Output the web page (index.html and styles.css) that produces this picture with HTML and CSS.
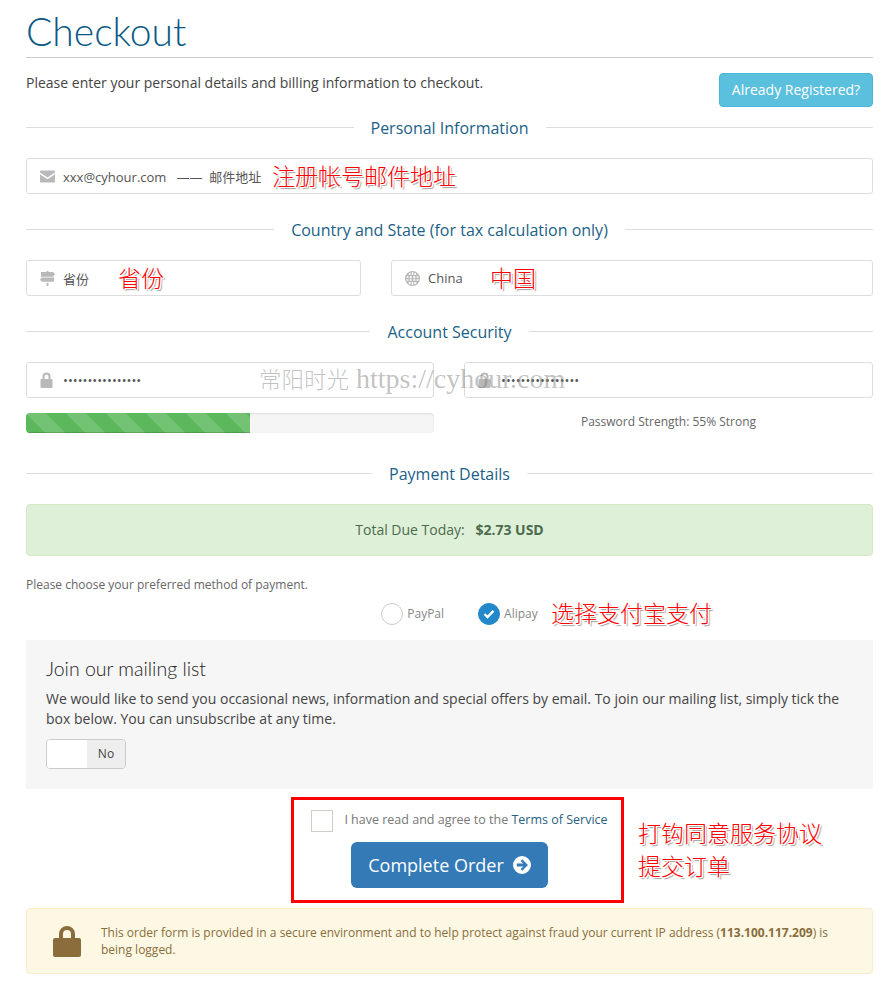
FILE: index.html
```html
<!DOCTYPE html>
<html lang="zh">
<head>
    <meta charset="UTF-8">
    <title>Checkout</title>
    <link rel="stylesheet" href="styles.css">
</head>
<body>
    <div class="header-lined">
        <h1>Checkout</h1>
    </div>

    <div class="intro">
        <p>Please enter your personal details and billing information to checkout.</p>
        <a class="btn-info" href="#">Already Registered?</a>
    </div>

    <div class="sub-heading"><span>Personal Information</span></div>
    <div class="field">
        <svg class="field-icon" viewBox="0 0 16 13"><path d="M0 2.200V1.200C0 .5.6 0 1.300 0h13.400C15.400 0 16 .5 16 1.200v1L8 7.500zM0 4v7.800C0 12.500.6 13 1.300 13h13.400c.7 0 1.300-.5 1.300-1.200V4L8 9.300z"/></svg>
        <input type="text" value="xxx@cyhour.com &nbsp;&nbsp;—— &nbsp;邮件地址">
    </div>

    <div class="sub-heading"><span>Country and State (for tax calculation only)</span></div>
    <div class="row row-location">
        <div class="field">
            <svg class="field-icon" viewBox="0 0 16 16"><path d="M7 0h2v1h5l2 2.500L14 6H1.500A.5.5 0 0 1 1 5.500v-4a.5.5 0 0 1 .5-.5H7zM2 7h12.500a.5.5 0 0 1 .5.5v3.500a.5.5 0 0 1-.5.5H2L0 9.250zM7 12.500h2V16H7z"/></svg>
            <input type="text" value="省份">
        </div>
        <div class="field">
            <svg class="field-icon" viewBox="0 0 16 16"><path fill-rule="evenodd" d="M8 0a8 8 0 1 1 0 16A8 8 0 0 1 8 0zM7.200 1.300v3h1.600v-3zM4 2.800v1.500h2V1.800C5.200 2 4.500 2.300 4 2.800zM10 1.800v2.500h2V2.800c-.5-.5-1.200-.8-2-1zM1.400 7.200h2.300V5.500H2.100c-.4.500-.6 1.100-.7 1.700zM5 5.500v2.200h2.200V5.500zM8.800 5.500v2.200H11V5.500zM12.300 5.500v1.700h2.300c-.1-.6-.3-1.200-.7-1.700zM1.400 8.800c.1.600.3 1.200.7 1.700h1.600V8.800zM5 8.800v1.700h2.200V8.800zM8.800 8.800v1.700H11V8.800zM12.300 8.800v1.700h1.600c.4-.5.6-1.100.7-1.700zM4 11.800v1.400c.5.500 1.200.8 2 1v-2.400zM7.200 11.800v2.900h1.600v-2.900zM10 11.800v2.400c.8-.2 1.500-.5 2-1v-1.400z"/></svg>
            <input type="text" value="China">
        </div>
    </div>

    <div class="sub-heading"><span>Account Security</span></div>
    <div class="row row-password">
        <div class="field">
            <svg class="field-icon field-icon-lock" viewBox="0 0 12 16"><path fill-rule="evenodd" d="M2 7V4.500a4 4 0 0 1 8 0V7h1a1 1 0 0 1 1 1v7a1 1 0 0 1-1 1H1a1 1 0 0 1-1-1V8a1 1 0 0 1 1-1zM4 7h4V4.500a2 2 0 0 0-4 0z"/></svg>
            <input class="secret" type="password" value="passwordpassword">
        </div>
        <div class="field">
            <svg class="field-icon field-icon-lock" viewBox="0 0 12 16"><path fill-rule="evenodd" d="M2 7V4.500a4 4 0 0 1 8 0V7h1a1 1 0 0 1 1 1v7a1 1 0 0 1-1 1H1a1 1 0 0 1-1-1V8a1 1 0 0 1 1-1zM4 7h4V4.500a2 2 0 0 0-4 0z"/></svg>
            <input class="secret" type="password" value="passwordpassword">
        </div>
    </div>
    <div class="row row-password row-strength">
        <div class="progress"><div class="progress-bar" style="width: 55%"></div></div>
        <p class="strength">Password Strength: 55% Strong</p>
    </div>

    <div class="sub-heading sub-heading-payment"><span>Payment Details</span></div>
    <div class="alert-success">Total Due Today: <strong>$2.73 USD</strong></div>

    <p class="choose">Please choose your preferred method of payment.</p>
    <div class="gateways">
        <label class="gateway"><span class="radio"></span>PayPal</label>
        <label class="gateway"><span class="radio radio-checked"><svg viewBox="0 0 12 10"><path d="M1.500 5l3 3 6-6.200"/></svg></span>Alipay</label>
    </div>

    <div class="mailing">
        <h4>Join our mailing list</h4>
        <p>We would like to send you occasional news, information and special offers by email. To join our mailing list, simply tick the box below. You can unsubscribe at any time.</p>
        <div class="switch"><span class="switch-handle"></span><span class="switch-label">No</span></div>
    </div>

    <div class="order">
        <label class="tos"><span class="checkbox"></span><span class="tos-text">I have read and agree to the <a href="#">Terms of Service</a></span></label>
        <a class="btn-order" href="#">Complete Order
            <svg viewBox="0 0 18 18"><path fill-rule="evenodd" d="M9 0a9 9 0 1 1 0 18A9 9 0 0 1 9 0zM9.200 3.300L7.600 4.900l2.800 2.700H3.800v2.800h6.600l-2.800 2.700 1.600 1.600L15 9z"/></svg>
        </a>
    </div>

    <div class="alert-warning">
        <svg class="warning-lock" viewBox="0 0 28 32"><path fill-rule="evenodd" d="M6 13V9a8 8 0 0 1 16 0v4h4a2 2 0 0 1 2 2v15a2 2 0 0 1-2 2H2a2 2 0 0 1-2-2V15a2 2 0 0 1 2-2zM10 13h8V9a4 4 0 0 0-8 0z"/></svg>
        <p>This order form is provided in a secure environment and to help protect against fraud your current IP address (<strong>113.100.117.209</strong>) is being logged.</p>
    </div>

    <!-- notes drawn over the screenshot -->
    <span class="note note-email">注册帐号邮件地址</span>
    <span class="note note-state">省份</span>
    <span class="note note-country">中国</span>
    <span class="note note-pay">选择支付宝支付</span>
    <span class="note note-order">打钩同意服务协议<br>提交订单</span>
    <span class="watermark"><span class="watermark-name">常阳时光</span> https://cyhour.com</span>
</body>
</html>
```

FILE: styles.css
```css
* {
    box-sizing: border-box;
}
body {
    position: relative;
    margin: 0;
    padding: 0 18px 31px 26px;
    background: #fff;
    color: #444;
    font-family: "Open Sans", sans-serif;
    font-size: 14px;
    line-height: 20px;
}
p {
    margin: 0;
}
a {
    text-decoration: none;
}
.header-lined {
    height: 58px;
    border-bottom: 1px solid #ccc;
}
.header-lined h1 {
    margin: 0;
    padding-top: 10px;
    color: #0b5a87;
    font-family: Lato, sans-serif;
    font-size: 39px;
    font-weight: 300;
    line-height: 42px;
}
.intro {
    display: flex;
    justify-content: space-between;
    align-items: flex-start;
    height: 48px;
    padding-top: 15px;
}
.btn-info {
    width: 154px;
    height: 34px;
    background: #5bc0de;
    border: 1px solid #46b8da;
    border-radius: 4px;
    color: #fff;
    font-size: 14px;
    line-height: 32px;
    text-align: center;
}
.sub-heading {
    display: flex;
    align-items: center;
    gap: 17px;
    height: 24px;
    margin: 10px 0 18px;
    color: #1c5f87;
    font-size: 16px;
}
.sub-heading::before,
.sub-heading::after {
    content: "";
    flex: 1;
    height: 1px;
    margin-top: -2px;
    background: #ddd;
}
.field {
    display: flex;
    align-items: center;
    height: 36px;
    padding-left: 13px;
    border: 1px solid #ddd;
    border-radius: 3px;
    background: #fff;
}
.field-icon {
    flex: none;
    width: 15px;
    height: 15px;
    margin-right: 8px;
    fill: #b9b9b9;
}
.field-icon-lock {
    width: 13px;
    height: 16px;
    margin-right: 10px;
}
.field input {
    flex: 1;
    min-width: 0;
    border: 0;
    outline: 0;
    padding: 0;
    background: none;
    color: #555;
    font-family: "Open Sans", "Noto Sans CJK SC", sans-serif;
    font-size: 13px;
}
.row {
    display: grid;
    column-gap: 30px;
}
.row-location {
    grid-template-columns: 335px 482px;
}
.row-password {
    grid-template-columns: 408px 409px;
}
.row + .sub-heading,
.field + .sub-heading {
    margin-top: 24px;
}
.row-strength {
    align-items: center;
    margin-top: 15px;
}
.progress {
    height: 20px;
    overflow: hidden;
    border-radius: 4px;
    background: #f5f5f5;
    box-shadow: inset 0 1px 2px rgba(0, 0, 0, 0.1);
}
.progress-bar {
    height: 100%;
    background-color: #5cb85c;
    background-image: linear-gradient(45deg, rgba(255, 255, 255, 0.15) 25%, transparent 25%, transparent 50%, rgba(255, 255, 255, 0.15) 50%, rgba(255, 255, 255, 0.15) 75%, transparent 75%);
    background-size: 40px 40px;
    box-shadow: inset 0 -1px 0 rgba(0, 0, 0, 0.15);
}
.strength {
    margin-top: -3px;
    color: #666;
    font-size: 12px;
    text-align: center;
}
.row-strength + .sub-heading-payment {
    margin-top: 29px;
}
.alert-success {
    height: 52px;
    border: 1px solid #d6e9c6;
    border-radius: 4px;
    background: #dff0d8;
    color: #4b6b4c;
    line-height: 50px;
    text-align: center;
}
.alert-success strong {
    margin-left: 7px;
}
.choose {
    margin-top: 19px;
    color: #666;
    font-size: 12px;
}
.gateways {
    display: flex;
    justify-content: center;
    gap: 34px;
    height: 45px;
    padding: 8px 0 0 20px;
}
.gateway {
    display: flex;
    align-items: center;
    gap: 4px;
    height: 22px;
    color: #888;
    font-size: 12px;
}
.radio {
    display: flex;
    align-items: center;
    justify-content: center;
    width: 22px;
    height: 22px;
    border: 1px solid #ccc;
    border-radius: 50%;
}
.radio-checked {
    border-color: #2388c9;
    background: #2388c9;
}
.radio-checked svg {
    width: 12px;
    height: 10px;
    fill: none;
    stroke: #fff;
    stroke-width: 2.4;
}
.mailing {
    height: 149px;
    padding: 18px 20px 0;
    background: #f6f6f6;
}
.mailing h4 {
    margin: 0 0 9px;
    color: #222;
    font-family: Lato, sans-serif;
    font-size: 19.5px;
    font-weight: 300;
    line-height: 22px;
}
.switch {
    display: flex;
    width: 80px;
    height: 30px;
    margin-top: 10px;
    overflow: hidden;
    border: 1px solid #ccc;
    border-radius: 4px;
    font-size: 12px;
    line-height: 28px;
}
.switch-handle {
    width: 40px;
    background: #fff;
}
.switch-label {
    flex: 1;
    background: #eee;
    text-align: center;
}
.order {
    display: flex;
    flex-direction: column;
    align-items: center;
    width: 333px;
    height: 106px;
    margin: 8px 0 5px 265px;
    padding-top: 10px;
    border: 3px solid #f00;
}
.tos {
    display: flex;
    align-items: center;
    gap: 11px;
    margin-left: 4px;
    color: #777;
    font-size: 12.5px;
}
.tos-text {
    padding-bottom: 2px;
}
.tos a {
    color: #2a5f80;
}
.checkbox {
    width: 22px;
    height: 22px;
    border: 1px solid #d0ccc8;
}
.btn-order {
    display: flex;
    align-items: center;
    justify-content: center;
    gap: 9px;
    width: 197px;
    height: 46px;
    margin: 10px 16px 0 0;
    border-radius: 6px;
    background: #337ab7;
    color: #fff;
    font-size: 18px;
}
.btn-order svg {
    width: 18px;
    height: 18px;
    fill: #fff;
}
.alert-warning {
    display: flex;
    align-items: center;
    gap: 20px;
    height: 66px;
    padding: 0 26px;
    border: 1px solid #faebcc;
    border-radius: 4px;
    background: #fcf8e3;
    color: #8a6d3b;
    font-size: 12px;
    line-height: 17px;
}
.warning-lock {
    flex: none;
    width: 28px;
    height: 32px;
    fill: #8a6d3b;
}
.note {
    position: absolute;
    color: #f00;
    font-family: "Noto Sans CJK SC", sans-serif;
    font-size: 23px;
    font-weight: 300;
    line-height: 33px;
    text-shadow: 1px 1px 0 #fff, -1px -1px 0 #fff, 1px -1px 0 #fff, -1px 1px 0 #fff, 2px 2px 1px #999;
}
.note-email {
    top: 159px;
    left: 272px;
}
.note-state {
    top: 261px;
    left: 118px;
}
.note-country {
    top: 261px;
    left: 490px;
}
.note-pay {
    top: 596px;
    left: 551px;
}
.note-order {
    top: 816px;
    left: 638px;
}
.watermark {
    position: absolute;
    top: 361px;
    left: 259px;
    color: rgba(120, 120, 120, 0.45);
    font-family: "Liberation Serif", serif;
    font-size: 28px;
    line-height: 34px;
    white-space: nowrap;
}
.watermark-name {
    font-family: "Noto Sans CJK SC", sans-serif;
    font-size: 22.5px;
    font-weight: 300;
}
```
